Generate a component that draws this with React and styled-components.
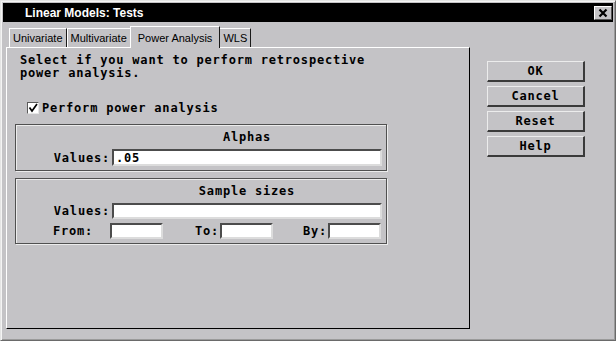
import React from "react";
import styled, { createGlobalStyle } from "styled-components";

const grey = "#c4c3c6";
const mono = `"DejaVu Sans Mono", "Liberation Mono", monospace`;
const sans = `"Liberation Sans", Arial, sans-serif`;

const GlobalStyle = createGlobalStyle`
  html, body {
    margin: 0;
    padding: 0;
    background: ${grey};
  }
  * {
    box-sizing: border-box;
  }
`;

const Window = styled.div`
  width: 616px;
  height: 341px;
  background: ${grey};
  border-top: 1px solid #e4e4e4;
  border-left: 1px solid #e4e4e4;
  border-right: 1px solid #6a6a6a;
  border-bottom: 1px solid #6a6a6a;
  box-shadow: inset 1px 1px 0 #f4f4f4, inset -1px -1px 0 #9a9a9a;
  padding: 2px;
  display: flex;
  flex-direction: column;
`;

const TitleBar = styled.div`
  height: 19px;
  background: #000;
  color: #fff;
  display: flex;
  align-items: center;
  justify-content: space-between;
  padding: 0 1px 0 22px;
  font: bold 12px ${sans};
`;

const CloseButton = styled.div`
  width: 18px;
  height: 14px;
  background: ${grey};
  border-top: 1px solid #fff;
  border-left: 1px solid #fff;
  border-right: 1px solid #555;
  border-bottom: 1px solid #555;
  display: flex;
  align-items: center;
  justify-content: center;
`;

const Body = styled.div`
  flex: 1;
  display: flex;
  padding: 4px 0 0 3px;
`;

const LeftColumn = styled.div`
  width: 464px;
  display: flex;
  flex-direction: column;
`;

const TabRow = styled.div`
  height: 21px;
  display: flex;
  align-items: flex-end;
  padding-left: 3px;
`;

const Tab = styled.div`
  position: relative;
  z-index: ${(p) => (p.$active ? 2 : 0)};
  height: ${(p) => (p.$active ? 22 : 19)}px;
  margin: 0 ${(p) => (p.$active ? -1 : 0)}px ${(p) => (p.$active ? -1 : 0)}px;
  padding: 0 ${(p) => (p.$active ? 7 : 3)}px;
  background: ${grey};
  border-top: 1px solid #fff;
  border-left: 1px solid #fff;
  border-right: 1px solid #1a1a1a;
  display: flex;
  align-items: center;
  font: 11px ${sans};
  color: #000;
  white-space: nowrap;
`;

const Panel = styled.div`
  height: 282px;
  border-top: 1px solid #fff;
  border-left: 1px solid #fff;
  border-right: 1px solid #000;
  border-bottom: 1px solid #000;
  padding: 6px 0 0 8px;
  display: flex;
  flex-direction: column;
  align-items: flex-start;
  font: bold 12px/12px ${mono};
  letter-spacing: 0.8px;
  color: #000;
`;

const Prompt = styled.div`
  margin-left: 5px;
  line-height: 13px;
`;

const CheckRow = styled.label`
  margin: 22px 0 0 12px;
  height: 12px;
  display: flex;
  align-items: center;
  gap: 3px;
`;

const CheckBox = styled.span`
  width: 12px;
  height: 12px;
  background: #fff;
  border-top: 1px solid #5a5a5a;
  border-left: 1px solid #5a5a5a;
  border-right: 1px solid #e6e6e6;
  border-bottom: 1px solid #e6e6e6;
  display: flex;
  align-items: center;
  justify-content: center;
`;

const Group = styled.div`
  width: 372px;
  margin-top: ${(p) => p.$top}px;
  border: 1px solid #505050;
  box-shadow: 1px 1px 0 #ececec, inset 1px 1px 0 #ececec;
  padding: 6px 0 4px;
  display: flex;
  flex-direction: column;
`;

const GroupTitle = styled.div`
  width: 270px;
  margin-left: 96px;
  text-align: center;
`;

const FieldRow = styled.div`
  display: flex;
  align-items: center;
  margin-top: 6px;
`;

const Label = styled.span`
  width: 96px;
  padding-right: 2px;
  text-align: right;
`;

const Field = styled.input`
  width: ${(p) => p.$w}px;
  height: ${(p) => p.$h}px;
  margin: 0;
  padding: 0 0 0 2px;
  background: #fff;
  border-top: 2px solid #4c4c4c;
  border-left: 2px solid #4c4c4c;
  border-right: 2px solid #dcdcdc;
  border-bottom: 2px solid #dcdcdc;
  font: bold 12px ${mono};
  letter-spacing: 0.8px;
  color: #000;
  outline: none;
`;

const RangeRow = styled.div`
  display: grid;
  grid-template-columns: 57px 53px 57px 53px 55px 53px;
  align-items: center;
  margin-top: 4px;
  padding-left: 37px;
`;

const RangeLabel = styled.span`
  text-align: ${(p) => (p.$right ? "right" : "left")};
  padding-right: ${(p) => (p.$right ? 1 : 0)}px;
`;

const ButtonColumn = styled.div`
  margin-left: 17px;
  padding-top: 35px;
  display: flex;
  flex-direction: column;
  gap: 4px;
`;

const Button = styled.button`
  width: 98px;
  height: 21px;
  padding: 0;
  background: ${grey};
  border-top: 1px solid #ececec;
  border-left: 1px solid #ececec;
  border-right: 2px solid #3a3a3a;
  border-bottom: 2px solid #3a3a3a;
  font: bold 12px ${mono};
  letter-spacing: 0.8px;
  color: #000;
`;

const tabs = ["Univariate", "Multivariate", "Power Analysis", "WLS"];
const buttons = ["OK", "Cancel", "Reset", "Help"];

const CloseIcon = () => (
  <svg width="10" height="10" viewBox="0 0 10 10">
    <path d="M1.5 1.5 L8.5 8.5 M8.5 1.5 L1.5 8.5" stroke="#000" strokeWidth="2.2" />
  </svg>
);

const CheckIcon = () => (
  <svg width="10" height="10" viewBox="0 0 10 10">
    <path d="M1.5 4.5 L4 8 L9 1" stroke="#000" strokeWidth="1.7" fill="none" />
  </svg>
);

export default function App() {
  return (
    <>
      <GlobalStyle />
      <Window>
        <TitleBar>
          <span>Linear Models: Tests</span>
          <CloseButton>
            <CloseIcon />
          </CloseButton>
        </TitleBar>
        <Body>
          <LeftColumn>
            <TabRow>
              {tabs.map((t) => (
                <Tab key={t} $active={t === "Power Analysis"}>
                  {t}
                </Tab>
              ))}
            </TabRow>
            <Panel>
              <Prompt>
                Select if you want to perform retrospective
                <br />
                power analysis.
              </Prompt>
              <CheckRow>
                <CheckBox>
                  <CheckIcon />
                </CheckBox>
                Perform power analysis
              </CheckRow>
              <Group $top={10}>
                <GroupTitle>Alphas</GroupTitle>
                <FieldRow>
                  <Label>Values:</Label>
                  <Field $w={270} $h={17} defaultValue=".05" readOnly />
                </FieldRow>
              </Group>
              <Group $top={7}>
                <GroupTitle>Sample sizes</GroupTitle>
                <FieldRow>
                  <Label>Values:</Label>
                  <Field $w={270} $h={16} readOnly />
                </FieldRow>
                <RangeRow>
                  <RangeLabel>From:</RangeLabel>
                  <Field $w={53} $h={16} readOnly />
                  <RangeLabel $right>To:</RangeLabel>
                  <Field $w={53} $h={16} readOnly />
                  <RangeLabel $right>By:</RangeLabel>
                  <Field $w={53} $h={16} readOnly />
                </RangeRow>
              </Group>
            </Panel>
          </LeftColumn>
          <ButtonColumn>
            {buttons.map((b) => (
              <Button key={b}>{b}</Button>
            ))}
          </ButtonColumn>
        </Body>
      </Window>
    </>
  );
}
